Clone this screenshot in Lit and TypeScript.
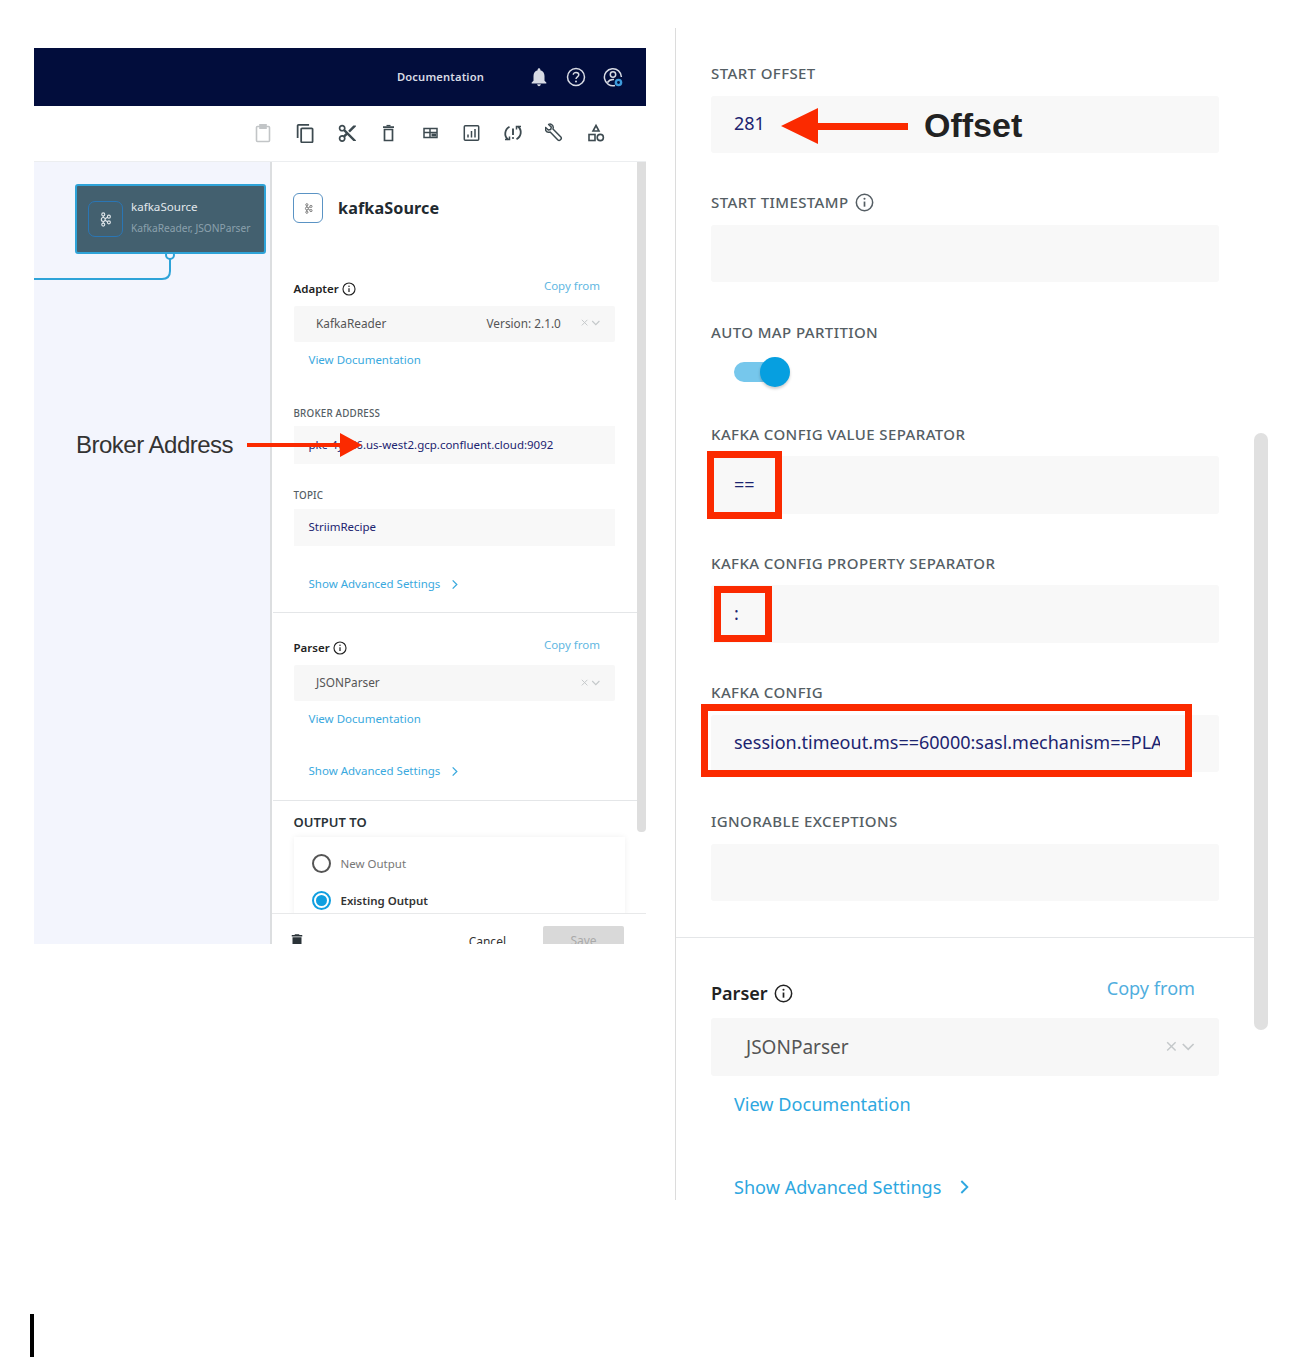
import { LitElement, html, css, svg } from "lit";
import { customElement } from "lit/decorators.js";

const info = (s: number) => html`<svg class="info" width=${s} height=${s} viewBox="0 0 20 20" fill="none" stroke="currentColor" stroke-width="1.6"><circle cx="10" cy="10" r="8.6"/><path d="M10 9v5.4" stroke-width="1.8"/><circle cx="10" cy="6" r="1.1" fill="currentColor" stroke="none"/></svg>`;
const chevron = (s: number) => html`<svg width=${s} height=${s} viewBox="0 0 12 12" fill="none" stroke="currentColor" stroke-width="1.4"><path d="M4 1.5 8.5 6 4 10.5"/></svg>`;
const clearCaret = (s: number) => html`<svg class="cc" width=${s * 2.4} height=${s} viewBox="0 0 24 10" fill="none" stroke="#c4c8ca" stroke-width="1.2"><path d="M1 1l7 7M8 1 1 8"/><path d="M14 2.5l4.5 4.5L23 2.5" stroke-width="1.4"/></svg>`;
const kafka = (s: number, c: string) => html`<svg width=${s} height=${s} viewBox="0 0 20 20" fill="none" stroke=${c} stroke-width="1.5"><circle cx="7" cy="3.2" r="2"/><circle cx="7" cy="10" r="2.6"/><circle cx="7" cy="16.8" r="2"/><circle cx="14.5" cy="6.2" r="2"/><circle cx="14.5" cy="13.8" r="2"/><path d="M7 5.2v2.2M7 12.6v2.2M9.4 9l3.3-1.9M9.4 11l3.3 1.9"/></svg>`;

const tools = [
  svg`<g fill="none" stroke="#c2c5c7" stroke-width="1.6"><rect x="3.5" y="3.5" width="13" height="15" rx="1"/><rect x="7" y="1.8" width="6" height="3.4" fill="#c2c5c7"/></g>`,
  svg`<path transform="scale(.88)" fill="#3d4a50" d="M16 1H4c-1.1 0-2 .9-2 2v14h2V3h12V1zm3 4H8c-1.1 0-2 .9-2 2v14c0 1.1.9 2 2 2h11c1.1 0 2-.9 2-2V7c0-1.1-.9-2-2-2zm0 16H8V7h11v14z"/>`,
  svg`<path transform="scale(.86)" fill="#3d4a50" d="M9.64 7.64c.23-.5.36-1.05.36-1.64 0-2.21-1.79-4-4-4S2 3.79 2 6s1.79 4 4 4c.59 0 1.14-.13 1.64-.36L10 12l-2.36 2.36C7.14 14.13 6.59 14 6 14c-2.21 0-4 1.79-4 4s1.79 4 4 4 4-1.79 4-4c0-.59-.13-1.14-.36-1.64L12 14l7 7h3v-1L9.64 7.64zM6 8c-1.1 0-2-.89-2-2s.9-2 2-2 2 .89 2 2-.9 2-2 2zm0 12c-1.1 0-2-.89-2-2s.9-2 2-2 2 .89 2 2-.9 2-2 2zM19 3l-6 6 2 2 7-7V3h-3z"/>`,
  svg`<g fill="none" stroke="#3d4a50" stroke-width="1.7"><path d="M6.500 6.500h8v11h-8zM5 4.200h11"/><path d="M8.500 2.600h4" stroke-width="1.4"/></g>`,
  svg`<g fill="none" stroke="#3d4a50" stroke-width="1.5"><rect x="4" y="5.500" width="13" height="9"/><path d="M10 5.500v9M10 9.500h7M4 9.500h6"/></g><rect x="11.500" y="10.500" width="4.500" height="3" fill="#3d4a50"/>`,
  svg`<g fill="none" stroke="#3d4a50" stroke-width="1.5"><rect x="3.300" y="2.800" width="14.400" height="14.400" rx="1"/><path d="M7 14.500v-3M10.500 14.500V8M14 14.500V6" /></g>`,
  svg`<g fill="none" stroke="#3d4a50" stroke-width="1.8"><path d="M5 16.500C.8 13 1.500 6.500 6.500 3.800"/><path d="M15 3.500c4.200 3.500 3.500 10-1.500 12.700"/><path d="M10 5.500v6.500" stroke-width="1.900"/><path d="M2 16.500h4.500v-3M18 3.500h-4.500v3" stroke-width="1.500"/></g><circle cx="10" cy="15" r="1.100" fill="#3d4a50"/>`,
  svg`<path transform="translate(-.5 .5) scale(.94)" fill="none" stroke="#3d4a50" stroke-width="1.6" stroke-linejoin="round" d="M1.200 4.200 4 7l2.600-.6.6-2.600L4.400 1C6.600 0 9 1.300 9.300 4c0 .7-.1 1.300-.3 1.800l8.400 8.600c.7.700.7 1.700 0 2.400l-.7.700c-.7.700-1.700.7-2.400 0L6 9.100c-.6.200-1.100.300-1.800.200C1.800 9 .2 6.600 1.200 4.200z"/>`,
  svg`<g fill="none" stroke="#3d4a50" stroke-width="1.6"><path d="M10 2.500 13 8H7z"/><rect x="3" y="11.500" width="6" height="6"/><circle cx="14.300" cy="14.500" r="3.100"/></g>`,
];

@customElement("app-root")
export class AppRoot extends LitElement {
  static styles = css`
    :host { display: block; width: 1298px; height: 1364px; position: relative; background: #fff; overflow: hidden; font-family: "Noto Sans", "Open Sans", sans-serif; color: #333; }
    .page { display: flex; align-items: flex-start; padding-left: 34px; }
    .shot { width: 612px; height: 896px; margin-top: 48px; display: flex; flex-direction: column; overflow: hidden; }
    .top { height: 58px; flex: none; background: #020d3c; display: flex; align-items: center; justify-content: flex-end; padding-right: 15px; color: #d8dbe4; }
    .doc { font-size: 11.2px; font-weight: 600; margin-right: 36px; padding-bottom: 1px; letter-spacing: .15px; }
    .top .ic { display: flex; width: 37px; justify-content: center; }
    .tools { height: 56px; flex: none; display: flex; align-items: center; justify-content: flex-end; padding: 0 29px 2px 0; border-bottom: 1px solid #eceef0; box-sizing: border-box; }
    .tools span { width: 41.600px; display: flex; justify-content: center; }
    .main { flex: 1; display: flex; min-height: 0; }
    .canvas { width: 236px; flex: none; background: #f3f5fd; position: relative; }
    .node { position: absolute; left: 41px; top: 22px; width: 191px; height: 70px; box-sizing: border-box; border: 2.500px solid #2ea3d8; border-radius: 3px; background: #43606f; display: flex; align-items: center; padding-left: 11px; gap: 8px; }
    .nodeic { width: 35px; height: 36px; box-sizing: border-box; border: 1.500px solid #2a76b5; border-radius: 7px; display: flex; align-items: center; justify-content: center; flex: none; }
    .nodet { display: flex; flex-direction: column; gap: 7px; padding-bottom: 4px; white-space: nowrap; }
    .nodet b { font-weight: 400; font-size: 11.600px; line-height: 15px; color: #e2e8ec; }
    .nodet i { font-style: normal; font-size: 10.200px; line-height: 14px; color: #8ba1ad; }
    .wire { position: absolute; left: 0; top: 90px; }
    .ba { position: absolute; left: 42px; top: 268px; font: 400 24px/30px "Liberation Sans", sans-serif; letter-spacing: -.5px; color: #333; white-space: nowrap; }
    .panel { flex: 1; min-width: 0; display: flex; flex-direction: column; border-left: 2.500px solid #dcdee0; }
    .pbody { flex: 1; min-height: 0; display: flex; overflow: hidden; }
    .pcontent { width: 365px; flex: none; box-sizing: border-box; padding: 31px 22px 0 21.500px; }
    .thumb { width: 9px; height: 670px; background: #dedede; border-radius: 0 0 4px 4px; flex: none; }
    .ptitle { display: flex; align-items: center; gap: 15px; height: 30px; margin: 0 0 52px -.5px; }
    .pic { width: 30px; height: 30px; box-sizing: border-box; border: 1.500px solid #5a93c4; border-radius: 6px; display: flex; align-items: center; justify-content: center; }
    .ptitle b { font-size: 16.200px; font-weight: 700; color: #1f2a30; letter-spacing: .1px; }
    .lh { display: flex; justify-content: space-between; align-items: flex-start; }
    .lh b { display: flex; align-items: center; gap: 3px; font-size: 11.500px; font-weight: 600; color: #222; line-height: 16px; margin-top: 6px; }
    .lh a { font-size: 11.500px; color: #62b7e2; line-height: 16px; margin: 3px 15px 0 0; }
    .sel { height: 36px; margin-top: 9px; background: #f7f7f7; display: flex; align-items: center; padding: 0 15px 2px 22.500px; box-sizing: border-box; font-size: 11.800px; color: #555; border-radius: 2px; }
    .sel .ver { margin-left: auto; margin-right: 20px; }
    .sel .cc { margin-left: auto; }
    .sel .ver + .cc { margin-left: 0; }
    .link { display: block; font-size: 11.500px; line-height: 16px; color: #3aa9de; padding-left: 15px; }
    .vd { margin-top: 10px; }
    .slab { font-size: 9.800px; font-weight: 500; line-height: 14px; color: #555e64; letter-spacing: .2px; }
    .inp { height: 37px; background: #f8f8f8; display: flex; align-items: center; padding: 0 0 2px 15px; box-sizing: border-box; font-size: 11.500px; color: #1c2470; white-space: nowrap; }
    .link.adv { display: flex; align-items: center; gap: 9px; }
    hr { border: 0; border-top: 1px solid #e4e6e8; margin: 0; }
    .out { font-size: 13px; font-weight: 600; line-height: 18px; color: #2a3338; padding-top: 12px; margin-bottom: 1px; }
    .card { margin: 6px -10px 0 0; height: 80px; box-shadow: 0 0 6px #f0f0f0; padding: 17px 0 0 18px; box-sizing: border-box; }
    .radio { display: flex; align-items: center; gap: 10px; height: 19px; margin-bottom: 18px; font-size: 11.500px; }
    .radio .c { width: 19px; height: 19px; box-sizing: border-box; border-radius: 50%; border: 2px solid #555; display: flex; align-items: center; justify-content: center; flex: none; }
    .radio.on .c { border-color: #109fe0; }
    .radio.on .c::after { content: ""; width: 11px; height: 11px; border-radius: 50%; background: #109fe0; }
    .radio.on { font-weight: 600; color: #333; }
    .radio.off { color: #777; }
    .pfoot { height: 31px; flex: none; background: #fff; border-top: 1px solid #e8e9ea; box-sizing: border-box; display: flex; align-items: flex-start; padding: 0 22px 0 16px; overflow: hidden; position: relative; }
    .pfoot svg { margin-top: 18px; flex: none; }
    .cancel { margin: 18px 37px 0 auto; font-size: 12px; line-height: 20px; color: #333; }
    .save { width: 81px; height: 40px; margin-top: 12px; background: #d9d9d9; color: #aaa; font-size: 12px; display: flex; justify-content: center; padding-top: 6px; box-sizing: border-box; border-radius: 2px; }

    .right { width: 593px; height: 1172px; margin: 28px 0 0 29px; border-left: 1px solid #dcdcdc; flex: none; display: flex; }
    .rcontent { width: 578px; flex: none; display: flex; flex-direction: column; }
    .rpad { padding: 35px 35px 0 35px; height: 909px; box-sizing: border-box; flex: none; }
    .rbar { width: 14px; height: 597px; margin-top: 405px; border-radius: 7px; background: #e0e0e0; flex: none; }
    .f { height: 129.300px; }
    .f.short { height: 102px; }
    .fl { display: flex; align-items: center; gap: 6px; height: 20px; font-size: 15px; letter-spacing: .4px; font-weight: 500; color: #555e64; white-space: nowrap; }
    .fl .info { color: #555e64; }
    .fi { width: 508px; height: 57.500px; margin-top: 12.500px; background: #f8f8f8; border-radius: 3px; display: flex; align-items: center; padding: 0 0 2px 23px; box-sizing: border-box; font-size: 18px; color: #1c2470; white-space: nowrap; }
    .clip { width: 426px; overflow: hidden; }
    .toggle { margin: 20px 0 0 23px; width: 42px; height: 20px; border-radius: 10px; background: #76c7ec; position: relative; }
    .toggle::after { content: ""; position: absolute; right: -14px; top: -5px; width: 30px; height: 30px; border-radius: 50%; background: #069fe0; box-shadow: 0 2px 3px rgba(0,0,0,.2); }
    .rsec { padding: 39px 35px 0 35px; }
    .rlh { display: flex; justify-content: space-between; align-items: flex-start; }
    .rlh b { display: flex; align-items: center; gap: 6px; font-size: 18px; font-weight: 600; color: #222; line-height: 24px; margin-top: 4px; }
    .rlh a { font-size: 18.100px; line-height: 24px; color: #50aede; margin: -1px 24px 0 0; }
    .rsel { width: 508px; height: 58px; margin-top: 13px; background: #f7f7f7; border-radius: 3px; display: flex; align-items: center; justify-content: space-between; padding: 0 24px 0 35px; box-sizing: border-box; font-size: 19px; color: #555; }
    .rlink { display: block; font-size: 18.100px; line-height: 24px; color: #2ea7e0; padding-left: 23px; }
    .rlink.adv { display: flex; align-items: center; gap: 15px; }
    .red { position: absolute; border: 7px solid #fb2a00; box-sizing: border-box; pointer-events: none; }
    .offset { position: absolute; left: 924px; top: 103px; font: 700 34px/44px "Liberation Sans", sans-serif; color: #222; }
    .arrow { position: absolute; pointer-events: none; }
    .mark { position: absolute; left: 30px; top: 1314px; width: 4px; height: 43px; background: #000; }
  `;

  private field(label: unknown, value: unknown = "", extra = "") {
    return html`<div class="f ${extra}"><div class="fl">${label}</div><div class="fi">${value}</div></div>`;
  }

  render() {
    return html`
      <div class="page">
        <section class="shot">
          <div class="top">
            <span class="doc">Documentation</span>
            <span class="ic"><svg width="22" height="22" viewBox="0 0 24 24" fill="#d8dbe4"><path d="M12 22c1.100 0 2-.9 2-2h-4c0 1.100.9 2 2 2zm6-6v-5c0-3.070-1.630-5.640-4.500-6.320V4c0-.83-.67-1.500-1.500-1.500s-1.500.67-1.500 1.500v.68C7.640 5.360 6 7.920 6 11v5l-2 2v1h16v-1l-2-2z"/></svg></span>
            <span class="ic"><svg width="20" height="20" viewBox="0 0 20 20" fill="none" stroke="#d8dbe4" stroke-width="1.500"><circle cx="10" cy="10" r="8.500"/><path d="M7.300 7.800C7.300 4.600 12.800 4.700 12.800 7.800c0 2-2.800 2.200-2.800 4.300"/><circle cx="10" cy="14.500" r="1" fill="#d8dbe4" stroke="none"/></svg></span>
            <span class="ic"><svg width="20" height="20" viewBox="0 0 20 20" fill="none" stroke="#d8dbe4" stroke-width="1.500"><path d="M12 18.400A8.500 8.500 0 1 1 18.400 10"/><circle cx="10" cy="7.500" r="2.700"/><path d="M4.500 15.500c1.500-2.500 3.500-3.300 6.500-3"/><circle cx="15.500" cy="15.500" r="3.800" fill="#3d9bdc" stroke="none"/><circle cx="15.500" cy="15.500" r="1.400" fill="#020d3c" stroke="none"/></svg></span>
          </div>
          <div class="tools">${tools.map((t) => html`<span><svg width="20" height="20" viewBox="0 0 20 20">${t}</svg></span>`)}</div>
          <div class="main">
            <div class="canvas">
              <svg class="wire" width="150" height="30" viewBox="0 0 150 30" fill="none" stroke="#2ea3d8" stroke-width="2"><path d="M0 27H128q8 0 8-8V6"/><circle cx="136" cy="3" r="4" fill="#f3f5fd"/></svg>
              <div class="node">
                <div class="nodeic">${kafka(15, "#dfe6ea")}</div>
                <div class="nodet"><b>kafkaSource</b><i>KafkaReader, JSONParser</i></div>
              </div>
              <div class="ba">Broker Address</div>
            </div>
            <div class="panel">
              <div class="pbody">
                <div class="pcontent">
                  <div class="ptitle"><span class="pic">${kafka(11, "#666")}</span><b>kafkaSource</b></div>
                  <div class="lh"><b>Adapter ${info(14)}</b><a>Copy from</a></div>
                  <div class="sel">KafkaReader<span class="ver">Version: 2.1.0</span>${clearCaret(8)}</div>
                  <a class="link vd">View Documentation</a>
                  <div class="slab" style="margin-top:39px">BROKER ADDRESS</div>
                  <div class="inp" style="margin-top:5px;height:38px">pkc-4yyd6.us-west2.gcp.confluent.cloud:9092</div>
                  <div class="slab" style="margin-top:25px">TOPIC</div>
                  <div class="inp" style="margin-top:6px">StriimRecipe</div>
                  <a class="link adv" style="margin-top:30px">Show Advanced Settings ${chevron(11)}</a>
                  <hr style="margin:20px -22px 0 -21px" />
                  <div class="lh" style="margin-top:21px"><b>Parser ${info(14)}</b><a>Copy from</a></div>
                  <div class="sel">JSONParser<span class="cc">${clearCaret(8)}</span></div>
                  <a class="link vd">View Documentation</a>
                  <a class="link adv" style="margin-top:36px">Show Advanced Settings ${chevron(11)}</a>
                  <hr style="margin:21px -22px 0 -21px" />
                  <div class="out">OUTPUT TO</div>
                  <div class="card">
                    <div class="radio off"><span class="c"></span>New Output</div>
                    <div class="radio on"><span class="c"></span>Existing Output</div>
                  </div>
                </div>
                <div class="thumb"></div>
              </div>
              <div class="pfoot">
                <svg width="18" height="18" viewBox="0 0 24 24" fill="#2a3338"><path d="M6 19c0 1.100.9 2 2 2h8c1.100 0 2-.9 2-2V7H6v12zM19 4h-3.500l-1-1h-5l-1 1H5v2h14V4z"/></svg>
                <span class="cancel">Cancel</span>
                <span class="save">Save</span>
              </div>
            </div>
          </div>
        </section>

        <section class="right">
          <div class="rcontent">
            <div class="rpad">
              ${this.field("START OFFSET", "281")}
              ${this.field(html`START TIMESTAMP ${info(19)}`)}
              <div class="f short"><div class="fl">AUTO MAP PARTITION</div><div class="toggle"></div></div>
              ${this.field("KAFKA CONFIG VALUE SEPARATOR", "==")}
              ${this.field("KAFKA CONFIG PROPERTY SEPARATOR", ":")}
              ${this.field("KAFKA CONFIG", html`<span class="clip">session.timeout.ms==60000:sasl.mechanism==PLAIN</span>`)}
              ${this.field("IGNORABLE EXCEPTIONS")}
            </div>
            <hr />
            <div class="rsec">
              <div class="rlh"><b>Parser ${info(19)}</b><a>Copy from</a></div>
              <div class="rsel">JSONParser ${clearCaret(12)}</div>
              <a class="rlink" style="margin-top:16px">View Documentation</a>
              <a class="rlink adv" style="margin-top:59px">Show Advanced Settings ${chevron(16)}</a>
            </div>
          </div>
          <div class="rbar"></div>
        </section>
      </div>

      <svg class="arrow" style="left:247px;top:432px" width="116" height="26" viewBox="0 0 116 26"><path fill="#fb2a00" d="M0 11h93V1l22 12-22 12V15H0z"/></svg>
      <svg class="arrow" style="left:781px;top:107px" width="128" height="37" viewBox="0 0 128 37"><path fill="#fb2a00" d="M0 19 37 1v15h90v7H37v14z"/></svg>
      <div class="offset">Offset</div>
      <div class="red" style="left:707px;top:451px;width:75px;height:68px"></div>
      <div class="red" style="left:714px;top:586px;width:58px;height:56px"></div>
      <div class="red" style="left:701px;top:704px;width:491px;height:73px"></div>
      <div class="mark"></div>
    `;
  }
}
